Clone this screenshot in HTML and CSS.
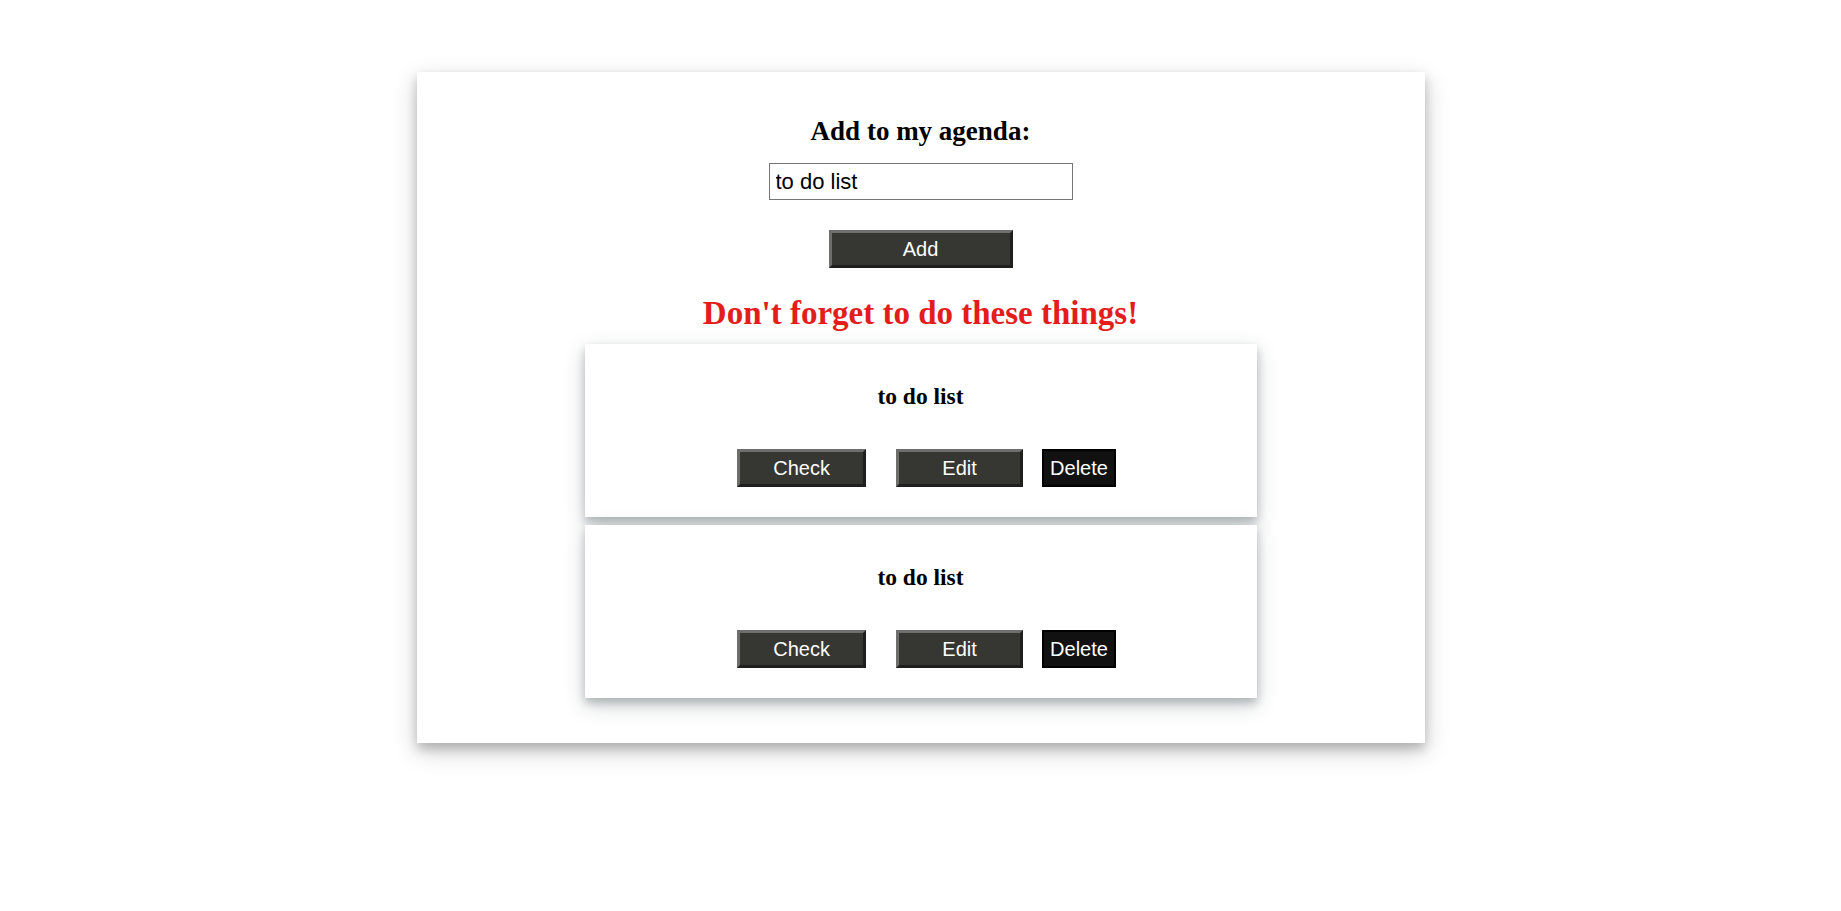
FILE: index.html
```html
<!DOCTYPE html>
<html lang="en">
<head>
<meta charset="utf-8">
<title>My agenda</title>
<link rel="stylesheet" href="styles.css">
</head>
<body>
<div class="agenda">
  <h2 class="agenda-title">Add to my agenda:</h2>
  <input class="agenda-input" type="text" value="to do list">
  <button class="btn btn-add">Add</button>
  <h1 class="reminder">Don't forget to do these things!</h1>
  <div class="item">
    <h3 class="item-text">to do list</h3>
    <div class="item-actions">
      <button class="btn btn-check">Check</button>
      <button class="btn btn-edit">Edit</button>
      <button class="btn-delete">Delete</button>
    </div>
  </div>
  <div class="item">
    <h3 class="item-text">to do list</h3>
    <div class="item-actions">
      <button class="btn btn-check">Check</button>
      <button class="btn btn-edit">Edit</button>
      <button class="btn-delete">Delete</button>
    </div>
  </div>
</div>
</body>
</html>
```

FILE: styles.css
```css
html, body {
  margin: 0;
  padding: 0;
  background: #ffffff;
}

body {
  font-family: "Liberation Serif", "Times New Roman", serif;
  color: #000;
  min-height: 911px;
  padding-bottom: 1px;
  box-sizing: border-box;
}

.agenda {
  width: 1008px;
  margin: 72px auto 100px;
  padding: 44px 0 45px;
  box-sizing: border-box;
  background: #fff;
  display: flex;
  flex-direction: column;
  align-items: center;
  box-shadow: 0 6px 10px 0 rgba(0, 0, 0, 0.2), 0 8px 24px 0 rgba(0, 0, 0, 0.19);
}

.agenda-title {
  margin: 0;
  font-size: 27px;
  line-height: 31px;
  font-weight: bold;
}

.agenda-input {
  margin: 16px 0 0;
  width: 304px;
  height: 37px;
  box-sizing: border-box;
  border: 1px solid #767676;
  padding: 0 6px;
  font-family: "Liberation Sans", Arial, sans-serif;
  font-size: 22px;
  color: #000;
  background: #fff;
  outline: none;
}

.btn {
  height: 38px;
  box-sizing: border-box;
  padding: 0;
  border-style: solid;
  border-width: 3px;
  border-color: #6e6e6c #1f1f1e #1f1f1e #6e6e6c;
  background: #363632;
  color: #fff;
  font-family: "Liberation Sans", Arial, sans-serif;
  font-size: 20px;
  cursor: pointer;
}

.btn-add {
  margin-top: 30px;
  width: 184px;
}

.reminder {
  margin: 26px 0 0;
  font-size: 33px;
  line-height: 38px;
  font-weight: bold;
  color: #e31c1c;
}

.item {
  width: 672px;
  margin-top: 12px;
  padding: 39px 0 30px;
  box-sizing: border-box;
  background: #fff;
  display: flex;
  flex-direction: column;
  align-items: center;
  box-shadow: 0 5px 8px 0 rgba(40, 55, 60, 0.25), 0 7px 20px 0 rgba(40, 55, 60, 0.22);
}

.item + .item {
  margin-top: 8px;
}

.item-text {
  margin: 0;
  font-size: 23.5px;
  line-height: 27px;
  font-weight: bold;
}

.item-actions {
  margin-top: 39px;
  align-self: stretch;
  padding-left: 12px;
  display: flex;
  justify-content: center;
}

.btn-check {
  width: 129px;
  margin-right: 30px;
}

.btn-edit {
  width: 127px;
  margin-right: 19px;
}

.btn-delete {
  height: 38px;
  box-sizing: border-box;
  padding: 0 6px;
  border: 2px solid #000;
  background: #111111;
  color: #fff;
  font-family: "Liberation Sans", Arial, sans-serif;
  font-size: 20px;
  cursor: pointer;
}
```
